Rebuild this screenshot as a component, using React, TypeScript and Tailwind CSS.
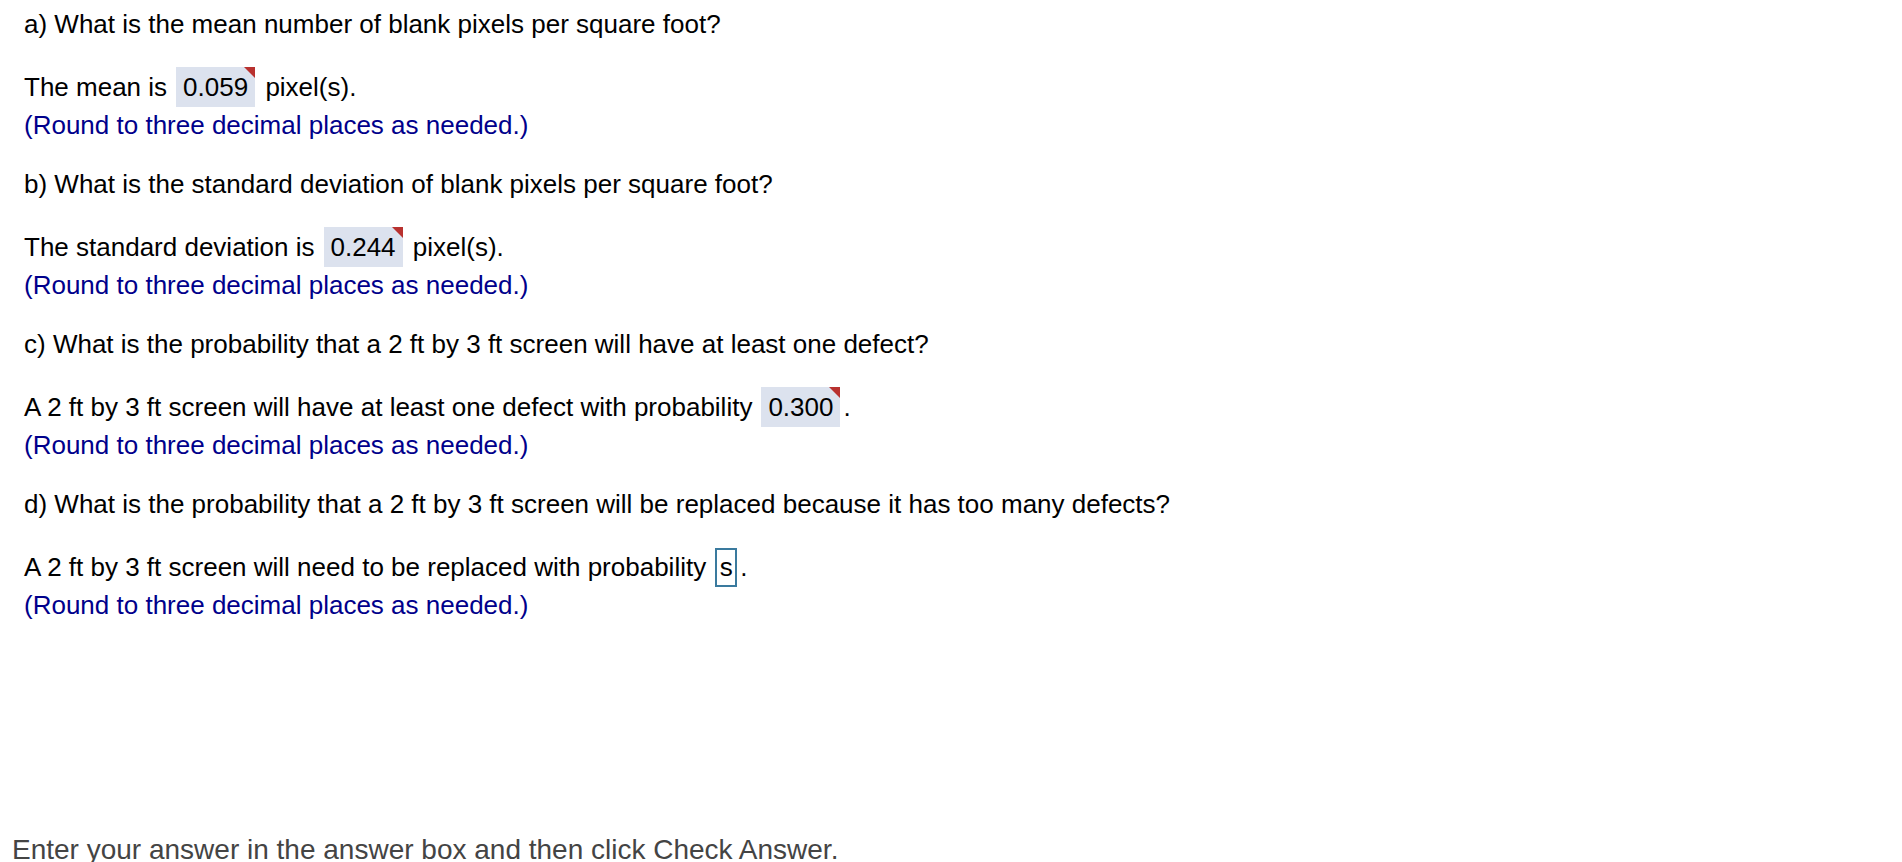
import React from 'react'

type Part = {
  question: string
  before: string
  value?: string
  after: string
}

const parts: Part[] = [
  { question: 'a) What is the mean number of blank pixels per square foot?', before: 'The mean is', value: '0.059', after: ' pixel(s).' },
  { question: 'b) What is the standard deviation of blank pixels per square foot?', before: 'The standard deviation is', value: '0.244', after: ' pixel(s).' },
  { question: 'c) What is the probability that a 2 ft by 3 ft screen will have at least one defect?', before: 'A 2 ft by 3 ft screen will have at least one defect with probability', value: '0.300', after: '.' },
  { question: 'd) What is the probability that a 2 ft by 3 ft screen will be replaced because it has too many defects?', before: 'A 2 ft by 3 ft screen will need to be replaced with probability', after: '.' },
]

function Answer({ value }: { value: string }) {
  return (
    <span className="relative ml-[9px] mr-[3px] inline-flex h-[40px] items-center bg-[#dce2ee] px-[7px]">
      {value}
      <span className="absolute right-0 top-0 h-0 w-0 border-l-[11px] border-t-[11px] border-l-transparent border-t-[#b8312f]" />
    </span>
  )
}

function Blank() {
  return (
    <span className="ml-[9px] mr-[3px] inline-flex h-[39px] w-[22px] items-center justify-center border-2 border-[#3a7a9e]">s</span>
  )
}

export default function App() {
  return (
    <div className="h-[862px] overflow-hidden bg-white font-['Liberation_Sans',Arial,sans-serif] text-[26px] text-black">
      <div className="px-[24px] pt-[8px]">
        {parts.map((p) => (
          <div key={p.question} className="mb-[24px]">
            <p className="leading-[32px]">{p.question}</p>
            <p className="mt-[27px] flex h-[40px] items-center whitespace-pre">
              <span>{p.before}</span>
              {p.value ? <Answer value={p.value} /> : <Blank />}
              <span>{p.after}</span>
            </p>
            <p className="mt-[-1px] leading-[38px] text-[#00008b]">(Round to three decimal places as needed.)</p>
          </div>
        ))}
      </div>
      <p className="mt-[210px] pl-[12px] text-[28px] leading-[32px] text-[#444]">Enter your answer in the answer box and then click Check Answer.</p>
    </div>
  )
}
